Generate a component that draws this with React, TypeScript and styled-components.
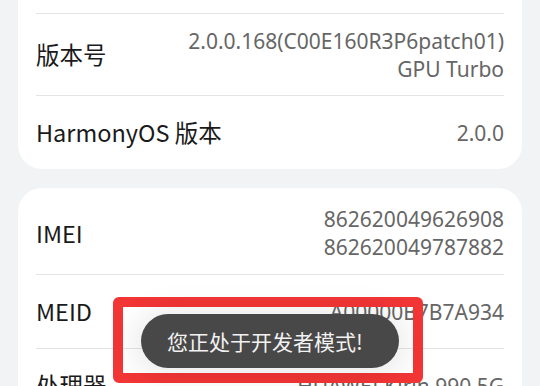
import React from "react";
import styled, { createGlobalStyle } from "styled-components";

const Global = createGlobalStyle`
  html, body { margin: 0; padding: 0; background: #f1f3f5; }
  body {
    font-family: "Noto Sans", "Noto Sans CJK SC", sans-serif;
    -webkit-font-smoothing: antialiased;
  }
  #root { width: 540px; height: 386px; overflow: hidden; position: relative; }
`;

const Page = styled.div`
  display: flex;
  flex-direction: column;
  gap: 19px;
  padding: 0 18px;
`;

const Card = styled.section<{ $clippedTop?: boolean }>`
  background: #ffffff;
  border-radius: ${(p) => (p.$clippedTop ? "0 0 24px 24px" : "24px")};
  padding: ${(p) => (p.$clippedTop ? "13px 18px 0" : "4px 18px 0")};
  display: flex;
  flex-direction: column;
`;

const Row = styled.div<{ $tall?: boolean; $first?: boolean }>`
  display: flex;
  align-items: center;
  justify-content: space-between;
  min-height: ${(p) => (p.$tall ? "82px" : "74px")};
  box-sizing: border-box;
  border-top: ${(p) => (p.$first ? "none" : "1px solid #e3e4e6")};
`;

const Label = styled.div`
  font-family: "Noto Sans CJK SC", "Noto Sans", sans-serif;
  font-size: 23.5px;
  line-height: 30px;
  color: #1a1a1a;
  white-space: nowrap;
  margin-top: -1px;
`;

const Value = styled.div`
  font-family: "Noto Sans", "Noto Sans CJK SC", sans-serif;
  font-size: 21px;
  line-height: 28px;
  color: #666666;
  text-align: right;
  white-space: nowrap;
`;

const Highlight = styled.div`
  position: absolute;
  left: 113px;
  top: 297px;
  width: 310px;
  height: 86px;
  box-sizing: border-box;
  border: 10px solid #f23535;
  border-radius: 6px;
`;

const Toast = styled.div`
  position: absolute;
  left: 141px;
  top: 314px;
  width: 258px;
  height: 54px;
  box-sizing: border-box;
  padding-right: 10px;
  border-radius: 27px;
  background: #484848;
  color: #f2f2f2;
  display: flex;
  align-items: center;
  justify-content: center;
  font-family: "Noto Sans CJK SC", sans-serif;
  font-size: 21px;
  box-shadow: 0 2px 28px 8px rgba(0, 0, 0, 0.08);
`;

export default function App() {
  return (
    <>
      <Global />
      <Page>
        <Card $clippedTop>
          <Row $tall>
            <Label>版本号</Label>
            <Value>
              2.0.0.168(C00E160R3P6patch01)
              <br />
              GPU Turbo
            </Value>
          </Row>
          <Row>
            <Label>HarmonyOS 版本</Label>
            <Value>2.0.0</Value>
          </Row>
        </Card>
        <Card>
          <Row $tall $first>
            <Label>IMEI</Label>
            <Value>
              862620049626908
              <br />
              862620049787882
            </Value>
          </Row>
          <Row>
            <Label>MEID</Label>
            <Value>A00000B7B7A934</Value>
          </Row>
          <Row>
            <Label>处理器</Label>
            <Value>HUAWEI Kirin 990 5G</Value>
          </Row>
        </Card>
      </Page>
      <Highlight />
      <Toast>您正处于开发者模式!</Toast>
    </>
  );
}
